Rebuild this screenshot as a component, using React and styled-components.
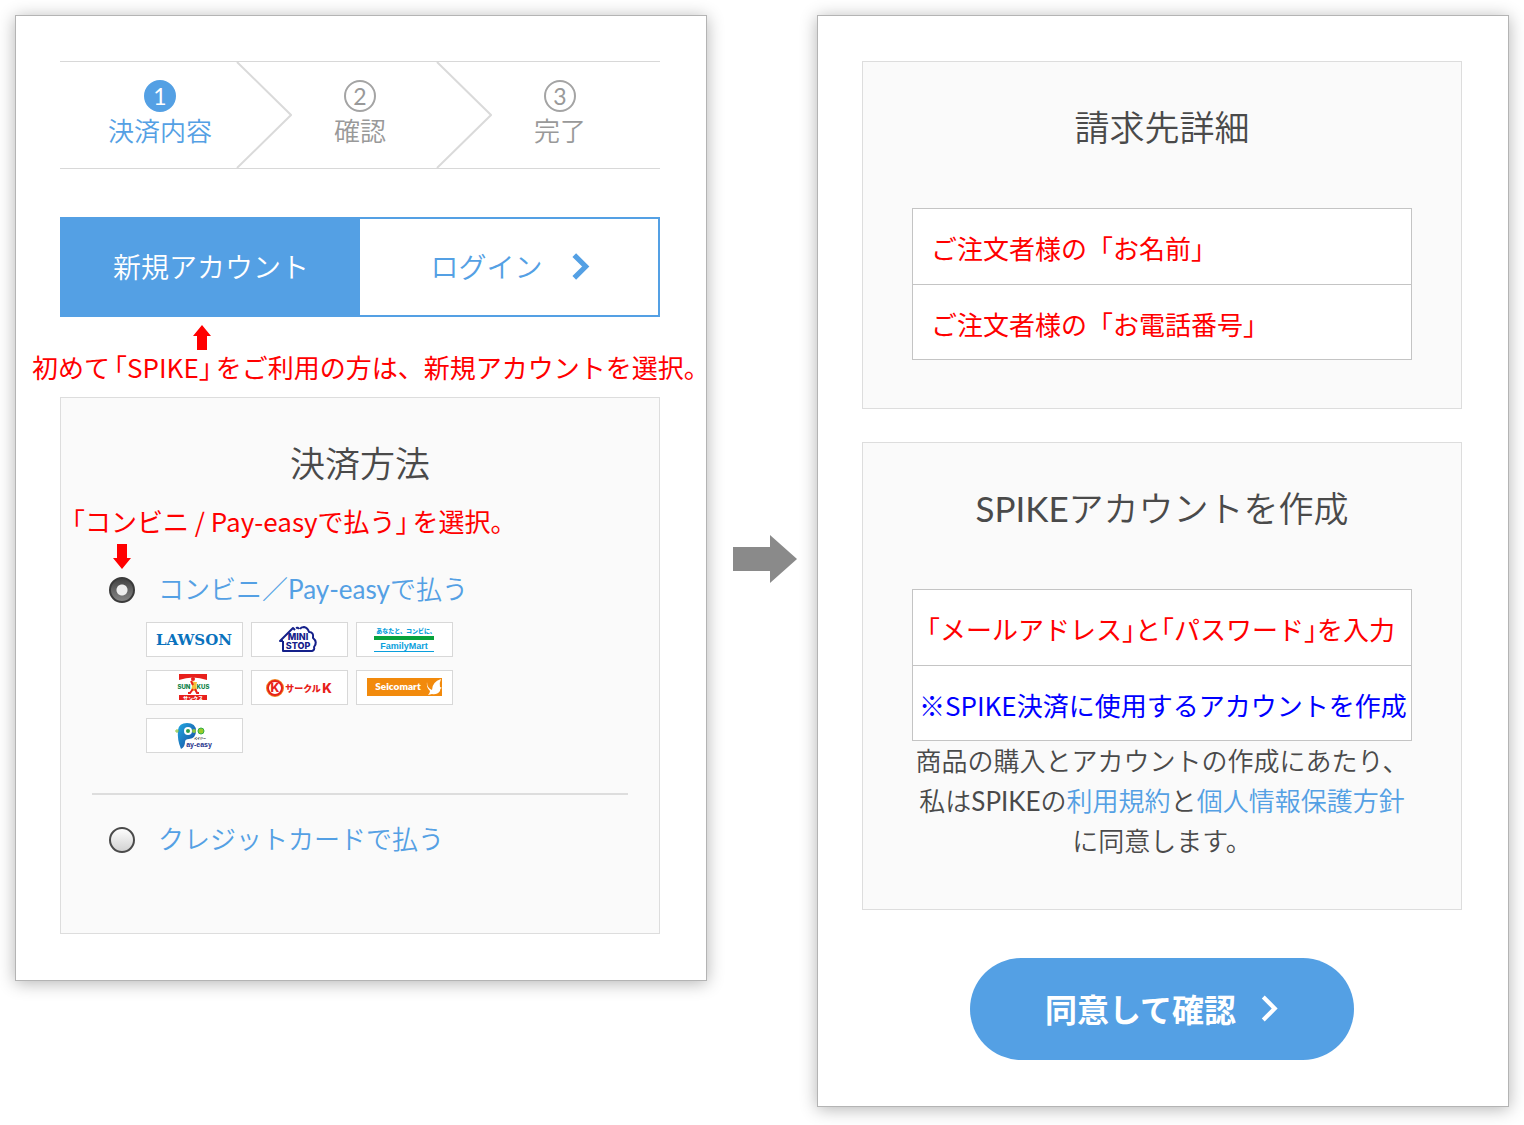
import React, { useState } from "react";
import styled, { createGlobalStyle } from "styled-components";

const GlobalStyle = createGlobalStyle`
	* {
		box-sizing: border-box;
	}
	body {
		margin: 0;
		background-color: white;
		color: #4a4a4a;
		font-family: Lato, "Noto Sans CJK JP DemiLight", "Noto Sans CJK JP", sans-serif;
		font-size: 26px;
		font-weight: 400;
	}
	button,
	input {
		font: inherit;
	}
	h2,
	p {
		margin: 0;
	}
`;

const steps = ["決済内容", "確認", "完了"];

const Chevron = ({ size, weight }) => (
	<svg width={size} height={size} viewBox="0 0 26 26" fill="none" aria-hidden="true">
		<path d="M7 2 L18 13 L7 24" stroke="currentColor" strokeWidth={weight} />
	</svg>
);

const NoteArrow = ({ down }) => (
	<svg width="18" height="25" viewBox="0 0 18 25" aria-hidden="true">
		<path
			d={down ? "M4 0h10v14h4l-9 11-9-11h4z" : "M9 0l9 11h-4v14H4V11H0z"}
			fill="#ff0000"
		/>
	</svg>
);

const Lawson = () => (
	<svg width="95" height="33" viewBox="0 0 95 33" role="img" aria-label="LAWSON">
		<LogoText x="47" y="22" $size={15} $color="#0a72bd" $font="DejaVu Serif">
			LAWSON
		</LogoText>
	</svg>
);

const MiniStop = () => (
	<svg width="95" height="33" viewBox="0 0 95 33" role="img" aria-label="MINI STOP">
		<path
			d="M31 18v10h29q3-1 2-4 4-5-1-9 1-6-4-6-1-4-5-5-3 0-4 2M31 18h-3L41 5l2 2M47 6q-1-2-3-1"
			fill="none"
			stroke="#14208a"
			strokeWidth="2"
			strokeLinejoin="round"
		/>
		<LogoText x="46" y="17" $size={9} $color="#14208a" $font="Inter">
			MINI
		</LogoText>
		<LogoText x="46" y="26" $size={9} $color="#14208a" $font="Inter">
			STOP
		</LogoText>
	</svg>
);

const FamilyMart = () => (
	<svg width="95" height="33" viewBox="0 0 95 33" role="img" aria-label="FamilyMart">
		<LogoText x="49" y="10" $size={6} $color="#0a9fdc">
			あなたと、コンビに、
		</LogoText>
		<rect x="17" y="13" width="60" height="4" fill="#07a23c" />
		<LogoText x="47" y="26" $size={9} $color="#0a9fdc" $font="Liberation Sans">
			FamilyMart
		</LogoText>
		<rect x="17" y="28" width="60" height="1" fill="#0a9fdc" />
	</svg>
);

const Sunkus = () => (
	<svg width="95" height="33" viewBox="0 0 95 33" role="img" aria-label="サンクス">
		<path d="M32 3h28v6q-14-5-28 0z" fill="#e8201c" />
		<rect x="32" y="24" width="28" height="5" fill="#e8201c" />
		<LogoText x="37" y="18" $size={6} $color="#0d8246" $font="Inter">
			SUN
		</LogoText>
		<LogoText x="56" y="18" $size={6} $color="#0d8246" $font="Inter">
			KUS
		</LogoText>
		<path d="M44 10l4 1 2 0-1 4 1 4-3 1-3 0 1-5z" fill="#f3c13b" />
		<circle cx="46" cy="8" r="2" fill="#e8201c" />
		<path
			d="M44 10l2 4M46 18l-3 4h-2M48 18l2 4h2"
			fill="none"
			stroke="#e8201c"
			strokeWidth="2"
		/>
		<LogoText x="46" y="29" $size={5} $color="white">
			サンクス
		</LogoText>
	</svg>
);

const CircleK = () => (
	<svg width="95" height="33" viewBox="0 0 95 33" role="img" aria-label="サークルK">
		<circle cx="23" cy="17" r="8" fill="white" stroke="#f0821e" strokeWidth="2" />
		<circle cx="23" cy="17" r="7" fill="white" stroke="#e7211a" strokeWidth="2" />
		<LogoText x="23" y="21" $size={12} $color="#e7211a" $font="Inter">
			K
		</LogoText>
		<LogoText x="51" y="21" $size={9} $color="#e7211a">
			サークル
		</LogoText>
		<LogoText x="75" y="22" $size={13} $color="#e7211a" $font="Inter">
			K
		</LogoText>
	</svg>
);

const Seicomart = () => (
	<svg width="95" height="33" viewBox="0 0 95 33" role="img" aria-label="Seicomart">
		<rect x="10" y="7" width="75" height="18" fill="#f28a0c" />
		<LogoText x="41" y="19" $size={10} $color="white" $font="Lato">
			Seicomart
		</LogoText>
		<path
			d="M70 11q0 6 5 8 0-8 9-11-2 4-1 8l2 1q-2 0-2 3-3 4-8 3l-4 1q2-2 2-4-4-4-3-9z"
			fill="white"
		/>
	</svg>
);

const PayEasy = () => (
	<svg width="95" height="33" viewBox="0 0 95 33" role="img" aria-label="Pay-easy">
		<defs>
			<linearGradient id="pay" x1="0" y1="0" x2="1" y2="1">
				<stop offset="0" stopColor="#22a9e1" />
				<stop offset="1" stopColor="#17479d" />
			</linearGradient>
		</defs>
		<path
			d="M34 30q-4-9-3-19 1-7 9-7 9 0 9 8 0 7-7 8-4 0-4 3 0 5-4 7z"
			fill="url(#pay)"
		/>
		<circle cx="41" cy="12" r="4" fill="white" />
		<circle cx="41" cy="12" r="2" fill="#2a9c48" />
		<circle cx="47" cy="12" r="2" fill="#8cc63f" />
		<circle cx="54" cy="12" r="3" fill="#9bcb28" stroke="#2fae49" />
		<path d="M28 12h4M30 10v4" stroke="#8cc63f" />
		<LogoText x="53" y="21" $size={3} $color="#222222">
			ペイジー
		</LogoText>
		<LogoText x="52" y="28" $size={7} $color="#1d2f8a" $font="Liberation Sans">
			ay-easy
		</LogoText>
	</svg>
);

const App = () => {
	const [method, setMethod] = useState("convenience");
	const [name, setName] = useState("ご注文者様の「お名前」");
	const [tel, setTel] = useState("ご注文者様の「お電話番号」");
	const [mail, setMail] = useState("「メールアドレス」と「パスワード」を入力");
	const [account, setAccount] = useState("※SPIKE決済に使用するアカウントを作成");

	return (
		<>
			<GlobalStyle />
			<Page>
				<Card>
					<Steps>
						{steps.map((label, index) => (
							<Step key={label} $active={index === 0}>
								<StepNumber $active={index === 0}>{index + 1}</StepNumber>
								<span>{label}</span>
								{index < 2 && (
									<StepEdge width="56" height="106" viewBox="0 0 56 106">
										<path d="M1 0 L55 53 L1 106" fill="none" stroke="#dadada" strokeWidth="2" />
									</StepEdge>
								)}
							</Step>
						))}
					</Steps>
					<Tabs>
						<TabButton type="button" $active>
							新規アカウント
						</TabButton>
						<TabButton type="button">
							ログイン
							<Chevron size={27} weight={5} />
						</TabButton>
					</Tabs>
					<TabNote>
						<NoteArrow />
						<Note>
							初めて<Quote>「SPIKE」</Quote>をご利用の方は、新規アカウントを選択。
						</Note>
					</TabNote>
					<MethodPanel>
						<Title>決済方法</Title>
						<MethodNote>
							<Note>
								<Quote>「コンビニ / Pay-easyで払う」</Quote>を選択。
							</Note>
							<NoteArrow down />
						</MethodNote>
						<Method>
							<Radio
								type="radio"
								name="method"
								id="convenience"
								checked={method === "convenience"}
								onChange={() => setMethod("convenience")}
							/>
							<label htmlFor="convenience">コンビニ／Pay-easyで払う</label>
						</Method>
						<Logos>
							<Logo><Lawson /></Logo>
							<Logo><MiniStop /></Logo>
							<Logo><FamilyMart /></Logo>
							<Logo><Sunkus /></Logo>
							<Logo><CircleK /></Logo>
							<Logo><Seicomart /></Logo>
							<Logo><PayEasy /></Logo>
						</Logos>
						<Divider />
						<Method>
							<Radio
								type="radio"
								name="method"
								id="credit"
								checked={method === "credit"}
								onChange={() => setMethod("credit")}
							/>
							<label htmlFor="credit">クレジットカードで払う</label>
						</Method>
					</MethodPanel>
				</Card>

				<NextArrow width="64" height="48" viewBox="0 0 64 48" aria-hidden="true">
					<path d="M0 12h37V0l27 24-27 24V36H0z" fill="#8a8a8a" />
				</NextArrow>

				<Card>
					<Panel>
						<Title>請求先詳細</Title>
						<Fields>
							<Field
								aria-label="お名前"
								value={name}
								onChange={(e) => setName(e.target.value)}
							/>
							<Field
								aria-label="お電話番号"
								value={tel}
								onChange={(e) => setTel(e.target.value)}
							/>
						</Fields>
					</Panel>
					<AccountPanel>
						<Title>SPIKEアカウントを作成</Title>
						<Fields>
							<Field
								aria-label="メールアドレス"
								value={mail}
								onChange={(e) => setMail(e.target.value)}
								$pad={14}
								$tight
							/>
							<Field
								aria-label="アカウント"
								value={account}
								onChange={(e) => setAccount(e.target.value)}
								$pad={6}
								$color="#0000ff"
							/>
						</Fields>
						<Terms>
							商品の購入とアカウントの作成にあたり、
							<br />
							私はSPIKEの<TermsLink href="#terms">利用規約</TermsLink>と
							<TermsLink href="#privacy">個人情報保護方針</TermsLink>
							<br />
							に同意します。
						</Terms>
					</AccountPanel>
					<SubmitButton type="submit">
						同意して確認
						<Chevron size={27} weight={4} />
					</SubmitButton>
				</Card>
			</Page>
		</>
	);
};

const Page = styled.main`
	display: grid;
	grid-template-columns: minmax(0, 1fr) 110px minmax(0, 1fr);
	align-items: start;
	padding: 15px 15px 18px;
`;

const Card = styled.section`
	padding: 45px 46px 46px 44px;
	border: 1px solid #b4b4b4;
	background-color: white;
	box-shadow: 0 2px 16px rgba(0, 0, 0, 0.3);
`;

const Steps = styled.div`
	display: grid;
	grid-template-columns: repeat(3, 1fr);
	height: 108px;
	border-top: 1px solid #d8d8d8;
	border-bottom: 1px solid #d8d8d8;
`;

const Step = styled.div`
	position: relative;
	display: flex;
	flex-direction: column;
	align-items: center;
	padding-top: 18px;
	line-height: 38px;
	color: ${(props) => (props.$active ? "#54a0e4" : "#999999")};
`;

const StepNumber = styled.span`
	width: 32px;
	height: 32px;
	border: 2px solid ${(props) => (props.$active ? "#54a0e4" : "#a4a4a4")};
	border-radius: 50%;
	background-color: ${(props) => (props.$active ? "#54a0e4" : "white")};
	color: ${(props) => (props.$active ? "white" : "#999999")};
	font-size: 23px;
	line-height: 28px;
	text-align: center;
`;

/* sits across the border of two steps */
const StepEdge = styled.svg`
	position: absolute;
	top: 0;
	right: -32px;
`;

const Tabs = styled.div`
	display: grid;
	grid-template-columns: 1fr 1fr;
	height: 100px;
	margin-top: 48px;
	border: 2px solid #54a0e4;
`;

const TabButton = styled.button`
	display: flex;
	align-items: center;
	justify-content: center;
	gap: 24px;
	padding: 0 0 2px;
	border: 0;
	background-color: ${(props) => (props.$active ? "#54a0e4" : "white")};
	color: ${(props) => (props.$active ? "white" : "#54a0e4")};
	font-size: 28px;
	cursor: pointer;

	&:last-child {
		padding-left: 6px;
	}
`;

const Note = styled.p`
	color: #ff0000;
	font-family: "Noto Sans CJK JP", sans-serif;
	line-height: 34px;
	white-space: nowrap;
`;

const Quote = styled.span`
	margin: 0 4px;
	font-feature-settings: "halt";
`;

const TabNote = styled.div`
	display: flex;
	flex-direction: column;
	margin: 0 -46px 13px -28px;
	padding-top: 8px;

	svg {
		margin-left: 161px;
	}
`;

const Panel = styled.div`
	padding: 40px 31px 48px;
	border: 1px solid #dddddd;
	background-color: #fafafa;
`;

const MethodPanel = styled(Panel)`
	padding-bottom: 72px;
`;

const AccountPanel = styled(Panel)`
	margin-top: 33px;
`;

const Title = styled.h2`
	font-size: 35px;
	font-weight: 400;
	line-height: 50px;
	text-align: center;
`;

const MethodNote = styled.div`
	display: flex;
	flex-direction: column;
	gap: 6px;
	margin: 16px 0 0 -24px;

	svg {
		margin-left: 45px;
	}
`;

const Method = styled.div`
	display: flex;
	align-items: center;
	gap: 23px;
	height: 42px;
	padding-left: 17px;
	color: #54a0e4;
	line-height: 38px;

	label {
		padding-bottom: 2px;
	}
`;

const Radio = styled.input`
	appearance: none;
	width: 26px;
	height: 26px;
	margin: 0;
	border: 2px solid #4a4a4a;
	border-radius: 50%;
	background: linear-gradient(#fdfdfd, #d2d2d2);

	&:checked {
		border-color: #3a3a3a;
		background: radial-gradient(circle, #eeeeee 5px, transparent 6px),
			linear-gradient(#444444, #858585);
	}
`;

const Logos = styled.div`
	display: grid;
	grid-template-columns: repeat(3, 97px);
	gap: 13px 8px;
	margin: 11px 0 40px 54px;
`;

const Logo = styled.div`
	height: 35px;
	border: 1px solid #d8d8d8;
	background-color: white;

	svg {
		display: block;
	}
`;

const LogoText = styled.text`
	fill: ${(props) => props.$color};
	font-family: ${(props) => props.$font || "Noto Sans CJK JP"}, sans-serif;
	font-size: ${(props) => props.$size}px;
	font-weight: 800;
	text-anchor: middle;
`;

const Divider = styled.hr`
	height: 2px;
	margin: 0 0 24px;
	border: 0;
	background-color: #dddddd;
`;

const NextArrow = styled.svg`
	justify-self: end;
	margin: 520px 20px 0 0;
`;

const Fields = styled.div`
	display: flex;
	flex-direction: column;
	margin: 56px 18px 0;
	border: 1px solid #c4c4c4;
`;

const Field = styled.input`
	width: 100%;
	height: 75px;
	padding: 2px 0 0 ${(props) => props.$pad || 18}px;
	border: 0;
	background-color: white;
	color: ${(props) => props.$color || "#ff0000"};
	font-family: "Noto Sans CJK JP", sans-serif;
	font-feature-settings: ${(props) => (props.$tight ? '"halt"' : "normal")};

	& + & {
		border-top: 1px solid #c4c4c4;
	}
`;

const Terms = styled.p`
	line-height: 40px;
	text-align: center;
`;

const TermsLink = styled.a`
	color: #54a0e4;
	text-decoration: none;
`;

const SubmitButton = styled.button`
	display: flex;
	align-items: center;
	justify-content: center;
	gap: 20px;
	width: 384px;
	height: 102px;
	margin: 48px auto 0;
	padding: 0 0 2px 4px;
	border: 0;
	border-radius: 51px;
	background-color: #54a0e4;
	color: white;
	font-family: Lato, "Noto Sans CJK JP", sans-serif;
	font-size: 32px;
	font-weight: 700;
	cursor: pointer;
`;

export default App;
